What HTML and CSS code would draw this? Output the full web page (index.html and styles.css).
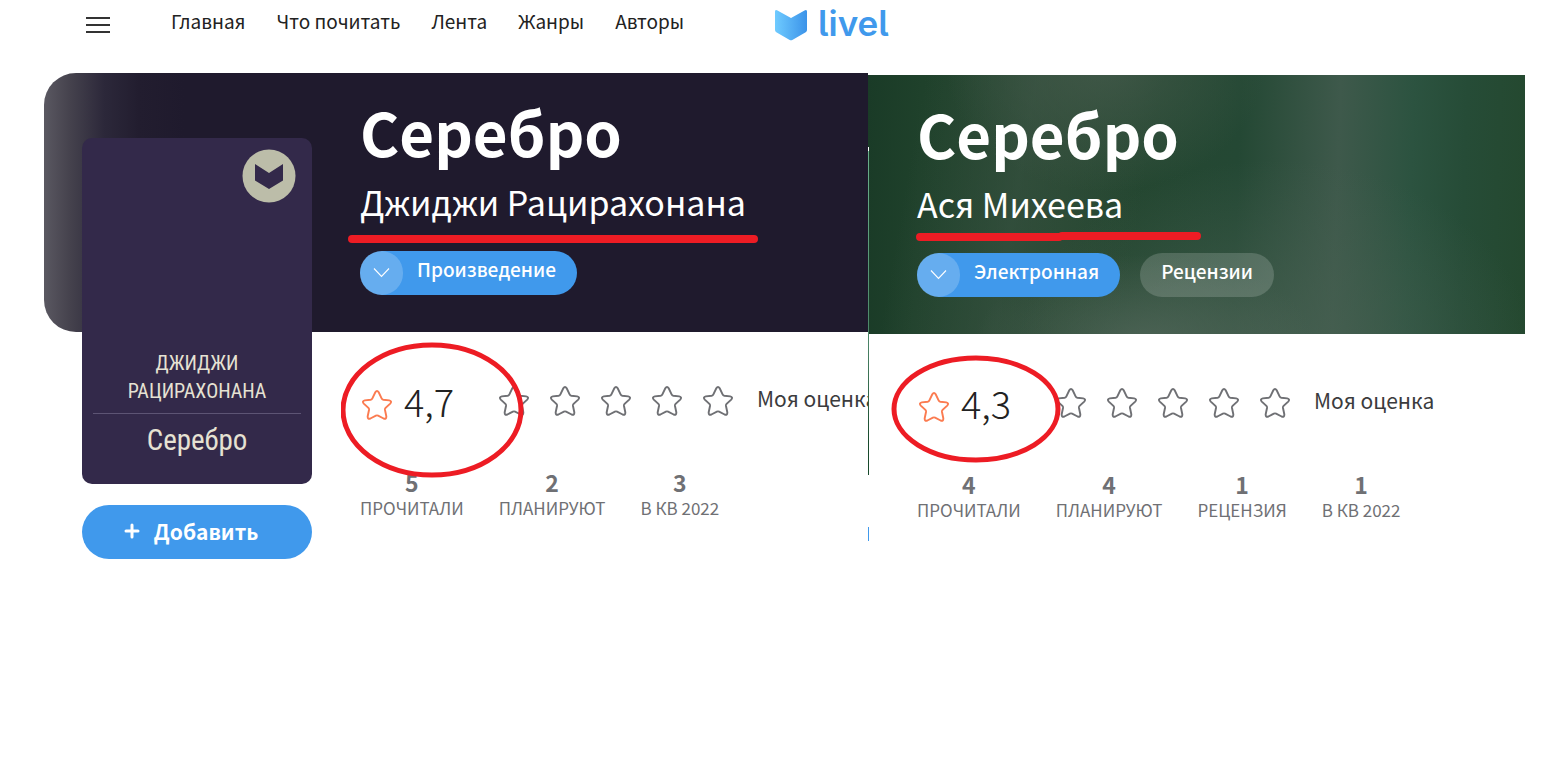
FILE: index.html
```html
<!DOCTYPE html>
<html lang="ru">
<head>
<meta charset="utf-8">
<title>Серебро</title>
<link rel="stylesheet" href="styles.css">
</head>
<body>
<svg class="sprite" aria-hidden="true">
  <symbol id="star" viewBox="0 0 30 30">
    <path d="M13.3 2.3Q15-.4 16.7 2.3L19.6 8.4Q20.1 9.5 21.3 9.7L27.2 10.4Q30.3 11.2 28.2 13.6L23.6 17.9Q22.8 18.8 23 20L24.3 26.2Q24.6 29.6 21.6 28.5L16.1 25.6Q15 25.1 13.9 25.6L8.4 28.5Q5.4 29.6 5.7 26.2L7 20Q7.2 18.8 6.4 17.9L1.8 13.6Q-.3 11.2 2.8 10.4L8.700 9.700Q9.900 9.500 10.400 8.400Z" fill="none" stroke="currentColor" stroke-width="1.900"/>
  </symbol>
  <symbol id="chevron" viewBox="0 0 18 12">
    <path d="M1 1.500L8.500 9.500L16 1.500" fill="none" stroke="currentColor" stroke-width="1.100"/>
  </symbol>
</svg>

<header class="header">
  <button class="menu" type="button" aria-label="Меню"><span></span><span></span><span></span></button>
  <nav class="nav">
    <a href="#">Главная</a>
    <a href="#">Что почитать</a>
    <a href="#">Лента</a>
    <a href="#">Жанры</a>
    <a href="#">Авторы</a>
  </nav>
  <a class="logo" href="#">
    <svg class="logo-mark" viewBox="0 0 34 32" aria-hidden="true">
      <defs><linearGradient id="mark"><stop offset="0" stop-color="#6fcbff"/><stop offset="1" stop-color="#3b93e9"/></linearGradient></defs>
      <path d="M1 2.500Q1 .2 3 1.200L17 9L31 1.200Q33 .2 33 2.500V21Q33 22.500 31.700 23.300L18.300 31Q17 31.700 15.700 31L2.300 23.300Q1 22.500 1 21Z" fill="url(#mark)"/>
    </svg>
    <span class="logo-text">livel</span>
  </a>
</header>

<main class="compare">
  <article class="book book-first">
    <div class="backdrop backdrop-dark"></div>
    <aside class="side">
      <div class="cover">
        <svg class="cover-badge" viewBox="0 0 54 54" aria-hidden="true">
          <circle cx="27" cy="27" r="26.500" fill="#bcbda9"/>
          <path d="M13 15L27 24L41 15V31.500L27 40L13 31.500Z" fill="#33294a"/>
        </svg>
        <p class="cover-author">ДЖИДЖИ<br>РАЦИРАХОНАНА</p>
        <p class="cover-title">Серебро</p>
      </div>
      <button class="add" type="button">
        <svg class="plus" viewBox="0 0 16 16" aria-hidden="true"><path d="M8 2V14M2 8H14" stroke="currentColor" stroke-width="3" stroke-linecap="round"/></svg>
        Добавить
      </button>
    </aside>
    <section class="intro">
      <h1 class="title">Серебро</h1>
      <a class="author" href="#">Джиджи Рацирахонана</a>
      <div class="tabs">
        <button class="tab tab-active" type="button"><span class="tab-icon"><svg viewBox="0 0 18 12" aria-hidden="true"><use href="#chevron"/></svg></span>Произведение</button>
      </div>
    </section>
    <section class="facts">
      <div class="rating">
        <div class="score"><svg aria-hidden="true"><use href="#star"/></svg>4,7</div>
        <div class="stars">
          <button type="button" aria-label="1"><svg><use href="#star"/></svg></button>
          <button type="button" aria-label="2"><svg><use href="#star"/></svg></button>
          <button type="button" aria-label="3"><svg><use href="#star"/></svg></button>
          <button type="button" aria-label="4"><svg><use href="#star"/></svg></button>
          <button type="button" aria-label="5"><svg><use href="#star"/></svg></button>
        </div>
        <span class="mine">Моя оценка</span>
      </div>
      <ul class="stats">
        <li><b>5</b>ПРОЧИТАЛИ</li>
        <li><b>2</b>ПЛАНИРУЮТ</li>
        <li><b>3</b>В КВ 2022</li>
      </ul>
    </section>
    <svg class="marks marks-first" viewBox="0 0 430 250" aria-hidden="true">
      <path d="M11 9H413" stroke-width="8"/>
      <ellipse cx="91" cy="180" rx="89" ry="65" stroke-width="5"/>
    </svg>
  </article>

  <div class="seam"><i class="seam-top"></i><i class="seam-green"></i><i class="seam-blue"></i></div>

  <article class="book book-second">
    <div class="backdrop backdrop-green"></div>
    <section class="intro">
      <h1 class="title">Серебро</h1>
      <a class="author" href="#">Ася Михеева</a>
      <div class="tabs">
        <button class="tab tab-active" type="button"><span class="tab-icon"><svg viewBox="0 0 18 12" aria-hidden="true"><use href="#chevron"/></svg></span>Электронная</button>
        <button class="tab" type="button">Рецензии</button>
      </div>
    </section>
    <section class="facts">
      <div class="rating">
        <div class="score"><svg aria-hidden="true"><use href="#star"/></svg>4,3</div>
        <div class="stars">
          <button type="button" aria-label="1"><svg><use href="#star"/></svg></button>
          <button type="button" aria-label="2"><svg><use href="#star"/></svg></button>
          <button type="button" aria-label="3"><svg><use href="#star"/></svg></button>
          <button type="button" aria-label="4"><svg><use href="#star"/></svg></button>
          <button type="button" aria-label="5"><svg><use href="#star"/></svg></button>
        </div>
        <span class="mine">Моя оценка</span>
      </div>
      <ul class="stats">
        <li><b>4</b>ПРОЧИТАЛИ</li>
        <li><b>4</b>ПЛАНИРУЮТ</li>
        <li><b>1</b>РЕЦЕНЗИЯ</li>
        <li><b>1</b>В КВ 2022</li>
      </ul>
    </section>
    <svg class="marks marks-second" viewBox="0 0 320 240" aria-hidden="true">
      <path d="M29 7H168M171 6H306" stroke-width="8"/>
      <ellipse cx="85" cy="179" rx="82" ry="51" stroke-width="5"/>
    </svg>
  </article>
</main>
</body>
</html>
```
FILE: styles.css
```css
* { box-sizing: border-box; }
body {
  margin: 0;
  background: #fff;
  color: #222;
  font-family: "Noto Sans CJK SC", "Noto Sans", sans-serif;
  font-size: 19px;
}
a { color: inherit; text-decoration: none; }
button { border: 0; padding: 0; background: none; color: inherit; font: inherit; cursor: pointer; }
h1, p, ul { margin: 0; padding: 0; }
.sprite { display: none; }

.header {
  display: flex;
  align-items: flex-start;
  height: 73px;
  padding: 9px 86px 0;
}
.menu { display: grid; gap: 5px; width: 24px; padding-top: 8px; }
.menu span { height: 2px; background: #333; }
.nav { display: flex; gap: 31px; margin-left: 61px; line-height: 24px; }
.logo { display: flex; gap: 10px; margin-left: 90px; color: #4099ec; }
.logo-mark { width: 34px; height: 32px; }
.logo-text { font-family: Inter, sans-serif; font-feature-settings: "cv05"; font-weight: 600; font-size: 35px; line-height: 29px; }

.compare { display: grid; grid-template-columns: 868fr 1px 690fr; }
.book { position: relative; display: grid; grid-template-rows: 259px auto; align-content: start; min-width: 0; }
.book-first { grid-template-columns: 38px 230px 1fr; padding-left: 44px; overflow: hidden; }
.book-second { grid-template-columns: 1fr; padding: 2px 34px 0 0; }
.backdrop { grid-row: 1; grid-column: 1 / -1; }
.backdrop-dark {
  border-radius: 32px 0 0 32px;
  background: linear-gradient(90deg, #5a5861 0, #45424d 26px, #2c283a 60px, #221d2f 95px, #1f1a2d 140px);
}
.backdrop-green {
  background:
    radial-gradient(ellipse 170px 90px at 42% 104%, #52675acc 0, #52675a00 100%),
    radial-gradient(ellipse 260px 200px at 62% 110%, #486152cc 0, #48615200 100%),
    radial-gradient(ellipse 160px 130px at 36% -5%, #445a4bcc 0, #445a4b00 100%),
    linear-gradient(100deg, #1a3b2700 8%, #3d554688 24%, #24472f00 42%),
    linear-gradient(92deg, #1a3b27 0, #1f412b 8%, #25462f 30%, #244834 56%, #3e594b 71%, #2c5340 82%, #264c37 90%, #24482f 100%);
}

.side { grid-row: 1 / 3; grid-column: 2; padding-top: 65px; }
.cover {
  display: flex;
  flex-direction: column;
  height: 346px;
  padding: 11px;
  border-radius: 10px;
  background: #33294a;
  color: #e6e2d3;
  font-family: "Roboto Condensed", "Liberation Sans Narrow", Roboto, sans-serif;
  text-align: center;
}
.cover-badge { width: 54px; height: 54px; margin: 0 5px auto auto; }
.cover-author { padding-bottom: 8px; border-bottom: 1px solid #5d5474; font-size: 20px; line-height: 28px; }
.cover-title { padding: 8px 0 15px; font-size: 29px; line-height: 36px; }
.add {
  display: flex;
  align-items: center;
  justify-content: center;
  gap: 14px;
  width: 100%;
  height: 54px;
  margin-top: 21px;
  padding: 0 12px 2px 0;
  border-radius: 27px;
  background: #4099ec;
  color: #fff;
  font-weight: 700;
  font-size: 21px;
}
.plus { width: 16px; height: 16px; }

.intro { grid-row: 1; color: #fff; padding-left: 48px; }
.book-first .intro, .book-first .facts { grid-column: 3; }
.book-second .intro, .book-second .facts { grid-column: 1; }
.title { padding-top: 22px; font-weight: 700; font-size: 60px; line-height: 72px; }
.author { display: block; margin-top: 12px; font-size: 34px; line-height: 46px; white-space: nowrap; }
.tabs { display: flex; gap: 20px; margin-top: 26px; }
.tab {
  display: flex;
  height: 44px;
  padding: 0 21px;
  border-radius: 22px;
  background: #ffffff2b;
  font-weight: 500;
  line-height: 36px;
}
.tab-active { gap: 14px; padding-left: 0; background: #4099ec; }
.tab-icon { display: grid; place-items: center; width: 43px; height: 44px; border-radius: 22px; background: #ffffff33; }
.tab-icon svg { width: 18px; height: 12px; }

.facts { grid-row: 2; padding: 46px 0 0 48px; white-space: nowrap; }
.rating { display: flex; height: 46px; padding-left: 2px; line-height: 46px; }
.score { display: flex; flex: none; gap: 12px; width: 137px; color: #222; font-weight: 300; font-size: 38px; }
.score svg { width: 30px; height: 30px; margin-top: 12px; color: #fb7b50; }
.stars { display: flex; flex: none; gap: 21px; padding-top: 8px; color: #6f7074; }
.stars button, .stars svg { display: block; width: 30px; height: 30px; }
.mine { margin-left: 24px; color: #3b3b3d; font-size: 21px; line-height: 40px; }
.stats { display: flex; gap: 35px; margin-top: 43px; list-style: none; color: #6f7074; font-size: 17px; line-height: 22px; text-align: center; }
.stats b { display: block; font-weight: 700; font-size: 23px; line-height: 30px; }

.marks { position: absolute; fill: none; stroke: #ed1c24; stroke-linecap: round; pointer-events: none; }
.marks-first { left: 341px; top: 157px; width: 430px; height: 250px; }
.marks-second { left: 22px; top: 157px; width: 320px; height: 240px; }

.seam { display: flex; flex-direction: column; padding-top: 2px; }
.seam-top { height: 72px; background: #1a3b27; }
.seam-green { height: 328px; background: linear-gradient(#fff 4px, #6ab08c 4px, #4b8467 60%, #184a2c 90%); }
.seam-blue { height: 14px; margin-top: 52px; background: #4099ec; }
```
